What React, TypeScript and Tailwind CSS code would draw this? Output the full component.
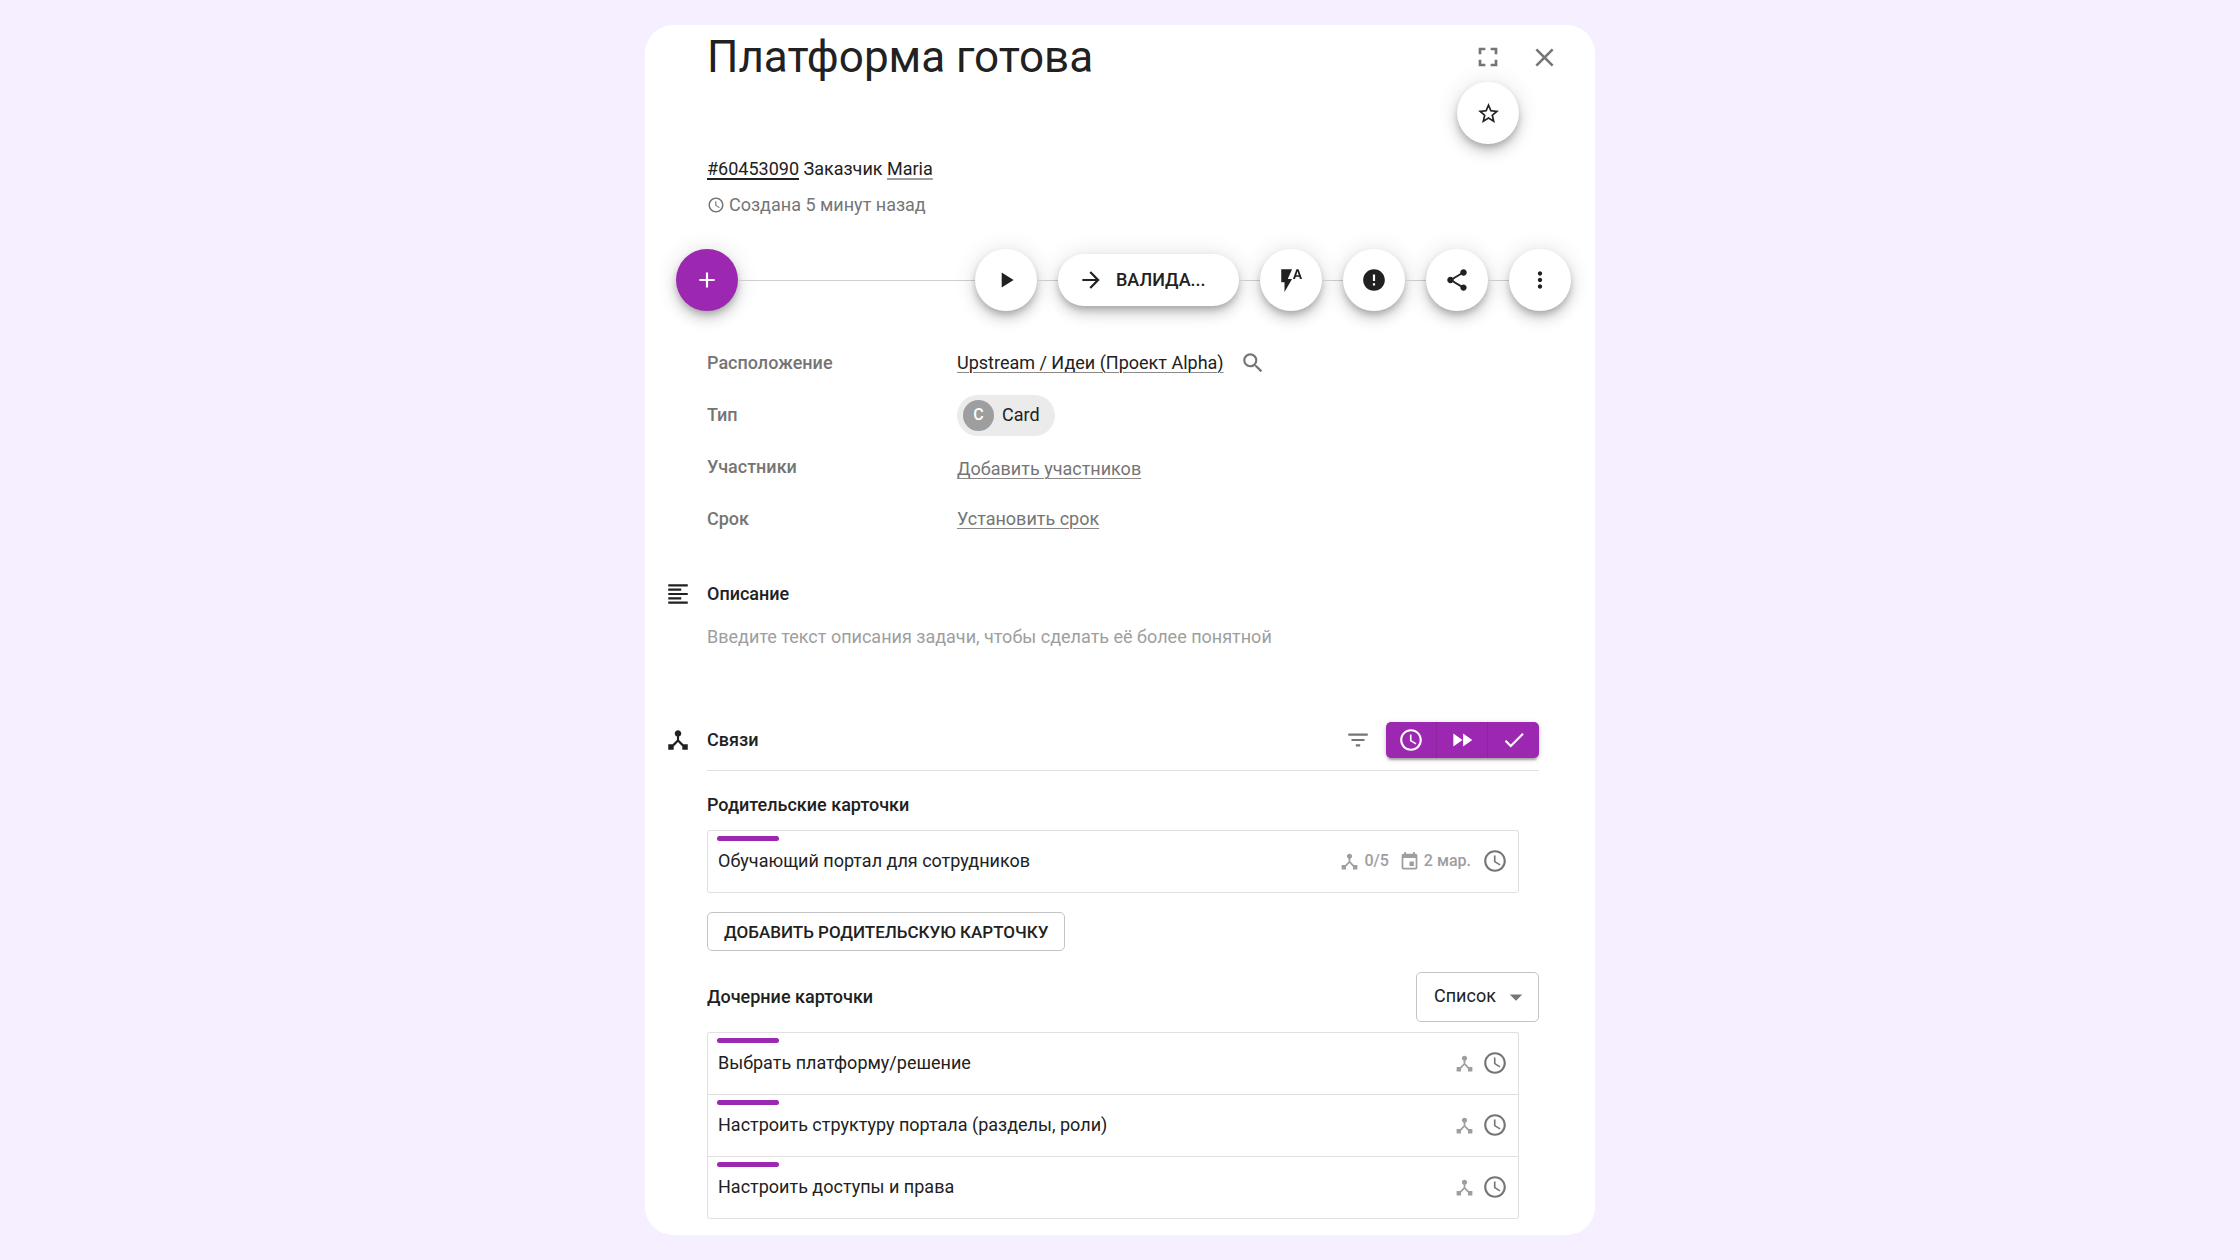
import type { ReactNode } from "react"
import {
    MdAccessTime,
    MdAdd,
    MdArrowDropDown,
    MdArrowForward,
    MdCheck,
    MdClose,
    MdDeviceHub,
    MdError,
    MdEvent,
    MdFastForward,
    MdFilterList,
    MdFlashAuto,
    MdFormatAlignLeft,
    MdFullscreen,
    MdMoreVert,
    MdPlayArrow,
    MdSearch,
    MdShare,
    MdStarBorder,
} from "react-icons/md"

type CardItem = {
    title: string
    progress?: string
    date?: string
}

const parents: CardItem[] = [
    { title: "Обучающий портал для сотрудников", progress: "0/5", date: "2 мар." },
]

const children: CardItem[] = [
    { title: "Выбрать платформу/решение" },
    { title: "Настроить структуру портала (разделы, роли)" },
    { title: "Настроить доступы и права" },
]

const shadow = "shadow-[0_4px_6px_-1px_rgba(0,0,0,0.2),0_8px_13px_0_rgba(0,0,0,0.14),0_1px_23px_0_rgba(0,0,0,0.12)]"
const link = "underline decoration-1 underline-offset-3 decoration-[#8a8a8a]"

const Fab = ({ label, primary, children }: { label: string, primary?: boolean, children: ReactNode }) => (
    <button
        aria-label={label}
        className={`size-[62px] shrink-0 flex justify-center items-center rounded-full cursor-pointer ${shadow} ${primary ? "bg-[#9c27b0] text-white" : "bg-white text-[#212121]"}`}
    >
        {children}
    </button>
)

const Line = ({ grow }: { grow?: boolean }) => (
    <span className={`h-px bg-[#cfcfcf] ${grow ? "flex-1" : "w-[21px] shrink-0"}`}></span>
)

const Row = ({ label, children }: { label: string, children: ReactNode }) => (
    <div className="h-[52px] flex items-center">
        <dt className="w-[250px] shrink-0 font-medium text-[#757575]">{label}</dt>
        <dd className="flex items-center">{children}</dd>
    </div>
)

const CardList = ({ items }: { items: CardItem[] }) => (
    <ul className="mr-5 border border-b-0 border-[#e0e0e0] rounded-[3px]">
        {items.map((item) => (
            <li key={item.title} className="h-[62px] px-[9px] pt-[5px] border-b border-[#e0e0e0] last:rounded-b-[3px]">
                <div className="w-[62px] h-[5px] rounded-full bg-[#9c27b0]"></div>
                <div className="h-10 flex items-center pr-px">
                    <a href="#" className="flex-1 pl-px">{item.title}</a>
                    <div className="flex items-center text-base font-medium text-[#9e9e9e]">
                        <MdDeviceHub size={21} />
                        {item.progress && <span className="ml-1">{item.progress}</span>}
                        {item.date && <MdEvent size={21} className="ml-[10px]" />}
                        {item.date && <span className="ml-1 mr-1">{item.date}</span>}
                        <MdAccessTime size={26} className="ml-[7px] text-[#757575]" />
                    </div>
                </div>
            </li>
        ))}
    </ul>
)

export default function App() {
    return (
        <div className="min-h-screen px-6 py-[25px] bg-[#f5efff] font-[Roboto,sans-serif] text-[18px] leading-7 text-[#212121]">
            <main className="max-w-[950px] mx-auto pb-4 bg-white rounded-[28px]">
                <header className="flex items-start pl-[62px] pr-[25px]">
                    <h1 className="flex-1 h-16 flex items-center text-[44px]">Платформа готова</h1>
                    <div className="flex flex-col items-center">
                        <button aria-label="На весь экран" className="w-full h-[57px] pt-[7px] flex justify-center items-center text-[#757575] cursor-pointer">
                            <MdFullscreen size={32} />
                        </button>
                        <Fab label="В избранное"><MdStarBorder size={25} /></Fab>
                    </div>
                    <button aria-label="Закрыть" className="w-[51px] h-16 flex justify-center items-center text-[#757575] cursor-pointer">
                        <MdClose size={31} />
                    </button>
                </header>

                <div className="flex flex-col gap-2 mt-[11px] pl-[62px]">
                    <p>
                        <a href="#" className="underline decoration-2 underline-offset-3">#60453090</a> Заказчик <a href="#" className="underline decoration-2 underline-offset-3 decoration-[#9e9e9e]">Maria</a>
                    </p>
                    <p className="flex items-center text-[#757575]">
                        <MdAccessTime size={18} className="mr-1" />
                        Создана 5 минут назад
                    </p>
                </div>

                <div className="flex items-center mt-[30px] pl-[31px] pr-6">
                    <Fab label="Добавить" primary><MdAdd size={26} /></Fab>
                    <Line grow />
                    <Fab label="Старт"><MdPlayArrow size={26} /></Fab>
                    <Line />
                    <button className={`w-[181px] h-[52px] flex items-center pl-5 rounded-full bg-white font-medium cursor-pointer ${shadow}`}>
                        <MdArrowForward size={26} className="mr-3" />
                        ВАЛИДА...
                    </button>
                    <Line />
                    <Fab label="Автоматизация"><MdFlashAuto size={26} /></Fab>
                    <Line />
                    <Fab label="Блокировка"><MdError size={26} /></Fab>
                    <Line />
                    <Fab label="Поделиться"><MdShare size={26} /></Fab>
                    <Line />
                    <Fab label="Ещё"><MdMoreVert size={26} /></Fab>
                </div>

                <dl className="mt-[26px] pl-[62px]">
                    <Row label="Расположение">
                        <a href="#" className={link}>Upstream / Идеи (Проект Alpha)</a>
                        <button aria-label="Найти на доске" className="ml-4 text-[#757575] cursor-pointer"><MdSearch size={26} /></button>
                    </Row>
                    <Row label="Тип">
                        <button className="h-[41px] flex items-center pl-[6px] pr-[15px] rounded-full bg-[#ebebeb] cursor-pointer">
                            <span className="size-[31px] flex justify-center items-center mr-2 rounded-full bg-[#9e9e9e] text-base font-medium text-white">C</span>
                            Card
                        </button>
                    </Row>
                    <Row label="Участники">
                        <a href="#" className={`pt-1 text-[#757575] ${link}`}>Добавить участников</a>
                    </Row>
                    <Row label="Срок">
                        <a href="#" className={`text-[#757575] ${link}`}>Установить срок</a>
                    </Row>
                </dl>

                <section className="mt-[31px]">
                    <div className="h-9 flex items-center">
                        <span className="w-[62px] pl-5"><MdFormatAlignLeft size={26} /></span>
                        <h2 className="font-medium">Описание</h2>
                    </div>
                    <p className="mt-[11px] pl-[62px] text-[#9e9e9e]">Введите текст описания задачи, чтобы сделать её более понятной</p>
                </section>

                <section className="mt-[71px] pr-14">
                    <div className="flex items-start">
                        <span className="w-[62px] h-9 flex items-center pl-5"><MdDeviceHub size={26} /></span>
                        <div className="flex-1 flex items-center pb-3 border-b border-[#e0e0e0]">
                            <h2 className="flex-1 font-medium">Связи</h2>
                            <button aria-label="Фильтр" className="mr-[15px] text-[#757575] cursor-pointer"><MdFilterList size={26} /></button>
                            <div className="h-9 flex rounded-[5px] bg-[#9c27b0] text-white shadow-[0_4px_2px_-2px_rgba(0,0,0,0.2),0_2px_3px_0_rgba(0,0,0,0.14),0_1px_6px_0_rgba(0,0,0,0.12)]">
                                <button aria-label="В очереди" className="w-[51px] flex justify-center items-center border-r border-[#8f24a1] cursor-pointer"><MdAccessTime size={26} /></button>
                                <button aria-label="В работе" className="w-[51px] flex justify-center items-center border-r border-[#8f24a1] cursor-pointer"><MdFastForward size={26} /></button>
                                <button aria-label="Готово" className="w-[51px] flex justify-center items-center cursor-pointer"><MdCheck size={26} /></button>
                            </div>
                        </div>
                    </div>

                    <div className="pl-[62px]">
                        <h3 className="mt-5 mb-[11px] font-medium">Родительские карточки</h3>
                        <CardList items={parents} />
                        <button className="h-[39px] mt-[19px] px-4 border border-[#c4c4c4] rounded-[5px] text-[17px] font-medium cursor-pointer">ДОБАВИТЬ РОДИТЕЛЬСКУЮ КАРТОЧКУ</button>

                        <div className="flex justify-between items-center mt-[21px] mb-[10px]">
                            <h3 className="font-medium">Дочерние карточки</h3>
                            <div className="relative">
                                <select aria-label="Вид дочерних карточек" className="appearance-none w-[123px] h-[50px] pl-[17px] pb-[2px] border border-[#c4c4c4] rounded-[5px] bg-white cursor-pointer">
                                    <option>Список</option>
                                    <option>Доска</option>
                                </select>
                                <MdArrowDropDown size={30} className="absolute top-[10px] right-2 text-[#757575] pointer-events-none" />
                            </div>
                        </div>
                        <CardList items={children} />
                    </div>
                </section>
            </main>
        </div>
    )
}
